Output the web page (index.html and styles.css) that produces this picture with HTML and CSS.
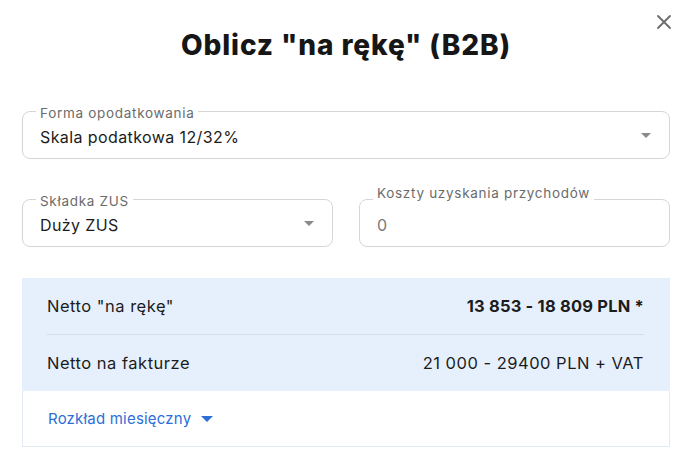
FILE: index.html
```html
<!DOCTYPE html>
<html lang="pl">
<head>
<meta charset="utf-8">
<link rel="stylesheet" href="styles.css">
</head>
<body>
<div class="dialog">
  <button class="close" aria-label="Zamknij">
    <svg width="16" height="16" viewBox="0 0 16 16"><path d="M2 2L14 14M14 2L2 14" stroke="#6b6b6b" stroke-width="1.8" stroke-linecap="round"/></svg>
  </button>
  <h1 class="title">Oblicz "na rękę" (B2B)</h1>
  <div class="field full">
    <span class="label">Forma opodatkowania</span>
    <span class="value">Skala podatkowa 12/32%</span>
    <span class="caret"></span>
  </div>
  <div class="row2">
    <div class="field">
      <span class="label">Składka ZUS</span>
      <span class="value">Duży ZUS</span>
      <span class="caret"></span>
    </div>
    <div class="field">
      <span class="label above">Koszty uzyskania przychodów</span>
      <span class="value muted">0</span>
    </div>
  </div>
  <div class="panel">
    <div class="res">
      <div class="line sep">
        <span>Netto "na rękę"</span>
        <span class="bold">13 853 - 18 809 PLN *</span>
      </div>
      <div class="line">
        <span>Netto na fakturze</span>
        <span>21 000 - 29400 PLN + VAT</span>
      </div>
    </div>
    <div class="more">
      <span>Rozkład miesięczny</span>
      <span class="bcaret"></span>
    </div>
  </div>
</div>
</body>
</html>
```
FILE: styles.css
```css
html, body {
  margin: 0;
  padding: 0;
  background: #fff;
}
body {
  font-family: "Inter", "Open Sans", sans-serif;
  color: #1c1c1c;
  width: 692px;
  height: 476px;
  overflow: hidden;
}
.dialog {
  position: relative;
  padding: 26px 22px 0 22px;
}
.close {
  position: absolute;
  right: 20px;
  top: 14px;
  border: 0;
  background: none;
  padding: 0;
  width: 16px;
  height: 16px;
}
.close svg { display: block; }
.title {
  margin: 0 0 47px;
  text-align: center;
  font-size: 28px;
  line-height: 38px;
  font-weight: 800;
  color: #161616;
  letter-spacing: 0.9px;
}
.field {
  position: relative;
  height: 48px;
  border: 1px solid #d6d6d6;
  border-radius: 8px;
  box-sizing: border-box;
  display: flex;
  align-items: center;
  padding: 0 17px;
}
.label {
  position: absolute;
  left: 13px;
  top: -7px;
  padding: 0 4px;
  background: #fff;
  font-size: 13.5px;
  line-height: 16px;
  color: #6b6b6b;
  letter-spacing: 0.7px;
}
.label.above {
  top: -15px;
}
.value {
  font-size: 16px;
  color: #1c1c1c;
  padding-top: 3px;
  letter-spacing: 0.4px;
}
.value.muted { color: #7a7a7a; }
.caret {
  margin-left: auto;
  margin-right: 1px;
  width: 0;
  height: 0;
  border-left: 5.5px solid transparent;
  border-right: 5.5px solid transparent;
  border-top: 5.5px solid #8a8a8a;
}
.row2 {
  margin-top: 40px;
  display: grid;
  grid-template-columns: 311px 311px;
  justify-content: space-between;
}
.panel {
  margin-top: 31px;
  border: 1px solid #e3eaf3;
  border-top: 0;
}
.res {
  background: #e6f0fc;
  padding: 0 26px 0 25px;
  margin: 0 -1px;
}
.line {
  height: 56px;
  display: flex;
  align-items: center;
  justify-content: space-between;
  font-size: 16.5px;
  letter-spacing: 0.5px;
  color: #1c1c1c;
}
.line.sep {
  height: 57px;
  border-bottom: 1px solid #d3dce7;
  box-sizing: border-box;
}
.bold { font-weight: 700; letter-spacing: 0.2px; }
.more {
  height: 55px;
  display: flex;
  align-items: center;
  padding-left: 25px;
  font-size: 15px;
  letter-spacing: 0.2px;
  color: #2d6fd6;
  gap: 10px;
}
.bcaret {
  width: 0;
  height: 0;
  border-left: 6px solid transparent;
  border-right: 6px solid transparent;
  border-top: 6px solid #2d6fd6;
}
```
